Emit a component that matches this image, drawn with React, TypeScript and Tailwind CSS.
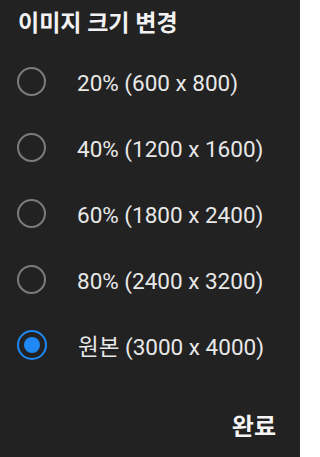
import React from "react";

const options = [
  "20% (600 x 800)",
  "40% (1200 x 1600)",
  "60% (1800 x 2400)",
  "80% (2400 x 3200)",
  "원본 (3000 x 4000)",
];

export default function App() {
  const selected = 4;
  return (
    <div
      className="w-[300px] h-[457px] bg-[#222222] flex flex-col overflow-hidden"
      style={{ fontFamily: 'Roboto, "Noto Sans CJK KR", sans-serif' }}
    >
      <div className="h-[48px] pl-[18px] pt-[10px] text-[23px] leading-[28px] font-bold text-[#f2f2f2]">
        이미지 크기 변경
      </div>
      <div className="flex flex-col">
        {options.map((label, i) => (
          <div key={i} className="h-[66px] flex items-center pl-[17px]">
            {i === selected ? (
              <div className="w-[30px] h-[30px] rounded-full border-[2px] border-[#1e88f5] flex items-center justify-center">
                <div className="w-[16px] h-[16px] rounded-full bg-[#1e88f5]" />
              </div>
            ) : (
              <div className="w-[29px] h-[29px] rounded-full border-[2px] border-[#7c7c7c]" />
            )}
            <div className="ml-[31px] mt-[3px] text-[22.5px] leading-[28px] text-[#e8e8e8]">
              {label}
            </div>
          </div>
        ))}
      </div>
      <div className="flex justify-end pr-[24px] pt-[34px]">
        <div className="text-[24px] leading-[30px] font-bold text-[#f4f4f4]">완료</div>
      </div>
    </div>
  );
}
